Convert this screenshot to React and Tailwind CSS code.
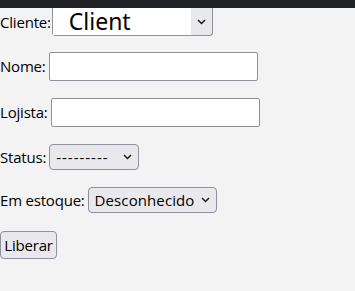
import React from "react";

function Chevron() {
    return (
        <svg width="9" height="6" viewBox="0 0 9 6" className="pointer-events-none">
            <path d="M1 1l3.5 3.5L8 1" fill="none" stroke="#1a1a1a" strokeWidth="1.5" />
        </svg>
    );
}

function FakeSelect({ label, width, labelClass = "" }) {
    return (
        <div
            className="flex items-center justify-between h-[26px] px-[6px] bg-[#e9e9ed] border border-[#8f8f9d] rounded-[4px] text-black"
            style={{ width }}
        >
            <span className={labelClass}>{label}</span>
            <Chevron />
        </div>
    );
}

export default function App() {
    return (
        <div className="min-h-screen bg-[#f3f3f3] font-['Open_Sans',sans-serif] text-[15px] text-black tracking-[-0.2px]">
            <div className="h-[8px] bg-[#202124]"></div>

            <div className="flex items-center h-[28px]">
                <span>Cliente:</span>
                <div className="relative ml-[1px] w-[161px] h-[28px] bg-[#e9e9ed] border border-[#8f8f9d] border-t-0 rounded-b-[4px] flex items-center justify-end pr-[6px]">
                    <div className="absolute left-0 top-0 w-[138px] h-[27px] bg-white flex items-center pl-[16px] text-[23px] leading-none text-black font-['Noto_Sans',sans-serif] tracking-normal">
                        Client
                    </div>
                    <Chevron />
                </div>
            </div>

            <div className="flex items-center mt-[16px] h-[29px]">
                <span>Nome:</span>
                <div className="ml-[3px] w-[209px] h-[29px] bg-white border border-[#8f8f9d] rounded-[2px]"></div>
            </div>

            <div className="flex items-center mt-[17px] h-[29px]">
                <span>Lojista:</span>
                <div className="ml-[3px] w-[209px] h-[29px] bg-white border border-[#8f8f9d] rounded-[2px]"></div>
            </div>

            <div className="flex items-center mt-[17px] h-[26px]">
                <span>Status:</span>
                <div className="ml-[3px]">
                    <FakeSelect label="---------" width={90} labelClass="tracking-[1px]" />
                </div>
            </div>

            <div className="flex items-center mt-[17px] h-[26px]">
                <span>Em estoque:</span>
                <div className="ml-[3px]">
                    <FakeSelect label="Desconhecido" width={129} labelClass="tracking-[0.1px]" />
                </div>
            </div>

            <div className="mt-[18px]">
                <button className="h-[28px] w-[57px] bg-[#e9e9ed] border border-[#8f8f9d] rounded-[4px] text-[15px] text-black">
                    Liberar
                </button>
            </div>
        </div>
    );
}
